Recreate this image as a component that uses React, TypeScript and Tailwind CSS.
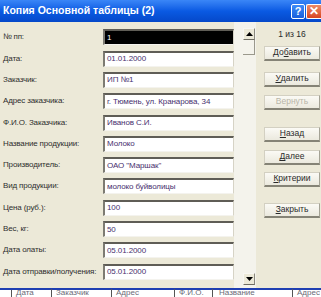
import React from "react";

const rows: { label: string; value: string }[] = [
  { label: "№ пп:", value: "1" },
  { label: "Дата:", value: "01.01.2000" },
  { label: "Заказчик:", value: "ИП №1" },
  { label: "Адрес заказчика:", value: "г. Тюмень, ул. Кранарова, 34" },
  { label: "Ф.И.О. Заказчика:", value: "Иванов С.И." },
  { label: "Название продукции:", value: "Молоко" },
  { label: "Производитель:", value: "ОАО \"Маршак\"" },
  { label: "Вид продукции:", value: "молоко буйволицы" },
  { label: "Цена (руб.):", value: "100" },
  { label: "Вес, кг:", value: "50" },
  { label: "Дата олаты:", value: "05.01.2000" },
  { label: "Дата отправки/получения:", value: "05.01.2000" },
];

function Field({ value, selected }: { value: string; selected?: boolean }) {
  return (
    <div
      className={`flex h-[16px] w-[131px] items-center overflow-hidden whitespace-nowrap border-t-2 border-l-2 border-r border-b border-t-[#5f5d56] border-l-[#7d7b72] border-r-[#d6d3c6] border-b-[#f4f3ee] pl-[2px] text-[8px] tracking-[-0.1px] ${
        selected ? "bg-black text-white" : "bg-white text-[#47306e]"
      }`}
    >
      {value}
    </div>
  );
}

function Btn({ children, top, disabled }: { children: React.ReactNode; top: string; disabled?: boolean }) {
  return (
    <div
      className={`${top} flex h-[15px] w-[56px] items-center justify-center border border-[#d3d0c2] border-r-[#a4a295] border-b-2 border-b-[#858376] bg-gradient-to-b from-[#fbfaf5] to-[#ebe9de] text-[8.5px] ${
        disabled ? "text-[#b8b5a8]" : "text-[#2a2a2a]"
      }`}
    >
      {children}
    </div>
  );
}

function Arrow({ up }: { up?: boolean }) {
  return (
    <div className="flex h-[12px] w-[12px] items-center justify-center border border-[#f8f7f2] border-r-[#8a887d] border-b-[#6f6d63] bg-[#ece9d8]">
      <svg width="7" height="4" viewBox="0 0 7 4">
        {up ? <polygon points="0,4 7,4 3.5,0" fill="#000" /> : <polygon points="0,0 7,0 3.5,4" fill="#000" />}
      </svg>
    </div>
  );
}

export default function App() {
  return (
    <div className="relative flex h-[297px] w-[321px] flex-col overflow-hidden bg-[#ece9d8] font-['Liberation_Sans',sans-serif]">
      {/* title bar */}
      <div className="flex h-[22px] shrink-0 items-center bg-gradient-to-b from-[#3a86f7] via-[#0a5ae3] to-[#0548c9] pl-[3px]">
        <span className="text-[10.5px] font-bold text-white">Копия Основной таблицы (2)</span>
        <div className="ml-auto flex items-center gap-[1px]">
          <div className="flex h-[15px] w-[14px] items-center justify-center rounded-[2px] border border-white bg-gradient-to-b from-[#3d8bf8] to-[#1a5fdc] text-[11px] font-bold leading-none text-white">
            ?
          </div>
          <div className="flex h-[15px] w-[15px] items-center justify-center rounded-l-[2px] border border-r-0 border-white bg-gradient-to-b from-[#ec8a66] to-[#d7441f] text-[12px] font-bold leading-none text-white">
            ✕
          </div>
        </div>
      </div>

      {/* body */}
      <div className="flex h-[266px] shrink-0">
        <div className="flex w-[234px] flex-col pt-[4.7px] pl-[3px]">
          {rows.map((r, i) => (
            <div key={r.label} className="flex h-[21.3px] items-center">
              <div className="w-[100px] whitespace-nowrap text-[8px] tracking-[-0.15px] text-[#2e2e2e]">{r.label}</div>
              <Field value={r.value} selected={i === 0} />
            </div>
          ))}
        </div>

        <div className="flex w-[22px] flex-col items-end bg-[#f4f3ec] pt-[6px] pr-[1px] pb-[3px]">
          <Arrow up />
          <div className="h-[15px] w-[12px] border-r border-b border-[#9a988c]" />
          <div className="flex-1" />
          <Arrow />
        </div>

        <div className="flex flex-1 flex-col pl-[8px]">
          <div className="mt-[6px] w-[56px] text-center text-[8.5px] text-[#2a2a2a]">1 из 16</div>
          <Btn top="mt-[5px]">
            До<u>б</u>авить
          </Btn>
          <Btn top="mt-[11px]">
            <u>У</u>далить
          </Btn>
          <Btn top="mt-[8px]" disabled>
            Вернуть
          </Btn>
          <Btn top="mt-[17px]">
            <u>Н</u>азад
          </Btn>
          <Btn top="mt-[8px]">
            <u>Д</u>алее
          </Btn>
          <Btn top="mt-[7px]">
            <u>К</u>ритерии
          </Btn>
          <Btn top="mt-[16px]">
            <u>З</u>акрыть
          </Btn>
        </div>
      </div>

      {/* table behind the dialog */}
      <div className="flex h-[9px] shrink-0 border-t-2 border-[#1f3fb2] bg-white text-[8px] leading-none text-[#6b6b78]">
        <div className="w-[12px] border-r border-[#555]" />
        <div className="-mt-[1px] w-[40px] border-r border-[#555] pl-[4px]">Дата</div>
        <div className="-mt-[1px] w-[60px] border-r border-[#555] pl-[4px]">Заказчик</div>
        <div className="-mt-[1px] w-[63px] border-r border-[#555] pl-[4px]">Адрес</div>
        <div className="-mt-[1px] w-[38px] border-r border-[#555] pl-[4px]">Ф.И.О.</div>
        <div className="-mt-[1px] w-[80px] border-r border-[#555] pl-[6px]">Название</div>
        <div className="-mt-[1px] flex-1 pl-[4px]">Адрес</div>
      </div>
    </div>
  );
}
